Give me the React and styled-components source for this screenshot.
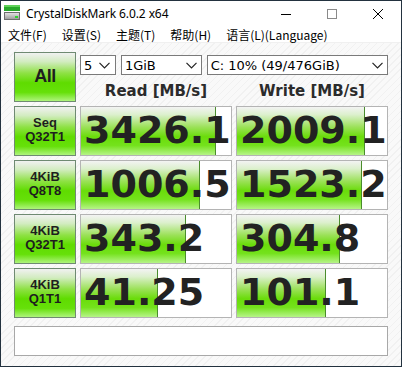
import React from "react";
import styled, { createGlobalStyle } from "styled-components";

// ================= GLOBAL =================

const GlobalStyle = createGlobalStyle`
  html, body {
    margin: 0;
    padding: 0;
    background: #ffffff;
  }

  #root {
    width: 402px;
    height: 367px;
  }
`;

// ================= WINDOW CHROME =================

const Window = styled.div`
  width: 402px;
  height: 367px;
  box-sizing: border-box;
  border: 1px solid #23323f;
  display: flex;
  flex-direction: column;
  background: #ffffff;
  overflow: hidden;
`;

const TitleBar = styled.div`
  height: 29px;
  display: flex;
  align-items: flex-start;
  background: #ffffff;
`;

const AppIcon = styled.div`
  width: 16px;
  height: 16px;
  margin: 3px 6px 0 3px;
  display: flex;
`;

const TitleText = styled.div`
  margin-top: 4px;
  font-family: "Noto Sans", "Open Sans", sans-serif;
  font-size: 12px;
  line-height: 17px;
  color: #000000;
  flex: 1;
  letter-spacing: -0.1px;
`;

const CtrlButton = styled.div`
  width: 46px;
  height: 29px;
  display: flex;
  align-items: center;
  justify-content: center;
  margin-top: -2px;
`;

const MenuBar = styled.div`
  height: 14px;
  display: flex;
  align-items: center;
  gap: 15px;
  padding-left: 7px;
  border-bottom: 1px solid #f0f0f0;
  font-family: "Noto Sans CJK SC", "Noto Sans", sans-serif;
  font-size: 12px;
  color: #000000;
`;

const MenuItem = styled.span`
  line-height: 14px;
  white-space: nowrap;
`;

// ================= CLIENT =================

const Client = styled.div`
  flex: 1;
  padding: 9px 13px 0 13px;
  background-color: #f8f8f8;
  background-image: repeating-linear-gradient(
    -45deg,
    #f9f9f9 0px,
    #f9f9f9 4px,
    #f1f1f1 4px,
    #f1f1f1 5px
  );
`;

const Board = styled.div`
  display: grid;
  grid-template-columns: 62px 152px 152px;
  grid-auto-rows: 50px;
  column-gap: 4px;
  row-gap: 4px;
`;

const greenButton = `
  background: linear-gradient(
    180deg,
    #f1f1f1 0%,
    #d2ecc0 18%,
    #8ee144 42%,
    #5fdc00 62%,
    #66e00a 82%,
    #aef47c 100%
  );
`;

const RunButton = styled.div`
  box-sizing: border-box;
  border: 1px solid #6f8a72;
  ${greenButton}
  display: flex;
  flex-direction: column;
  align-items: center;
  justify-content: center;
  font-family: "Liberation Sans", Arial, sans-serif;
  font-weight: bold;
  color: #1e1e1e;
  font-size: ${(p) => (p.$big ? "18px" : "13px")};
  line-height: ${(p) => (p.$big ? "18px" : "14px")};
  padding-bottom: ${(p) => (p.$big ? "2px" : "3px")};
  letter-spacing: ${(p) => (p.$big ? "-0.5px" : "0")};
`;

const TopPanel = styled.div`
  grid-column: 2 / span 2;
  display: flex;
  flex-direction: column;
`;

const SelectRow = styled.div`
  margin-top: 3px;
  display: flex;
  gap: 5px;
  height: 20px;
`;

const Select = styled.div`
  box-sizing: border-box;
  width: ${(p) => p.$w}px;
  height: 20px;
  border: 1px solid #7a7a7a;
  background: #ffffff;
  display: flex;
  align-items: center;
  justify-content: space-between;
  padding: 0 ${(p) => p.$pr}px 0 3px;
  font-family: "DejaVu Sans", Verdana, sans-serif;
  font-size: 13px;
  color: #000000;
`;

const HeaderRow = styled.div`
  flex: 1;
  display: grid;
  grid-template-columns: 152px 152px;
  column-gap: 4px;
  align-items: center;
  padding-top: 4px;
`;

const Header = styled.div`
  text-align: center;
  font-family: "DejaVu Sans", Verdana, sans-serif;
  font-weight: bold;
  font-size: 15px;
  color: #2b2b2b;
`;

const Cell = styled.div`
  position: relative;
  box-sizing: border-box;
  border: 1px solid #b4b4b4;
  background: #ffffff;
  overflow: hidden;
  display: flex;
  align-items: center;
`;

const Fill = styled.div`
  position: absolute;
  left: 0;
  top: 0;
  bottom: 0;
  box-sizing: border-box;
  border-right: 1px solid #4a8c2c;
  background: linear-gradient(
    180deg,
    #f3f3f3 0%,
    #dcf0cd 16%,
    #9be158 42%,
    #6adc0a 62%,
    #74e21c 80%,
    #b6f488 100%
  );
`;

const Value = styled.span`
  position: relative;
  padding-left: 3px;
  margin-top: -2px;
  font-family: "DejaVu Sans", Verdana, sans-serif;
  font-weight: bold;
  font-size: 38px;
  line-height: 1;
  color: #222222;
  white-space: nowrap;
`;

const Comment = styled.div`
  grid-column: 1 / span 3;
  margin-top: 4px;
  height: 30px;
  box-sizing: border-box;
  border: 1px solid #a8a8a8;
  background: #ffffff;
`;

// ================= ICONS =================

const Chevron = () => (
  <svg width="11" height="7" viewBox="0 0 11 7">
    <polyline points="0.5,0.8 5.5,5.8 10.5,0.8" fill="none" stroke="#222" strokeWidth="1.2" />
  </svg>
);

const DiskIcon = () => (
  <svg width="16" height="16" viewBox="0 0 16 16">
    <defs>
      <linearGradient id="dg" x1="0" y1="0" x2="0" y2="1">
        <stop offset="0" stopColor="#e6e6e6" />
        <stop offset="1" stopColor="#9a9a9a" />
      </linearGradient>
    </defs>
    <rect x="0" y="1" width="16" height="6" fill="#27a82a" />
    <rect x="0" y="1" width="16" height="2" fill="#5fd25a" />
    <rect x="0.5" y="8.5" width="15" height="7" fill="url(#dg)" stroke="#6e6e6e" />
    <rect x="11" y="12" width="3" height="2" fill="#2fd030" />
  </svg>
);

const MinIcon = () => (
  <svg width="10" height="10" viewBox="0 0 10 10">
    <line x1="0" y1="5.5" x2="10" y2="5.5" stroke="#000" strokeWidth="1" />
  </svg>
);

const MaxIcon = () => (
  <svg width="10" height="10" viewBox="0 0 10 10">
    <rect x="0.5" y="0.5" width="9" height="9" fill="none" stroke="#8a8a8a" strokeWidth="1" />
  </svg>
);

const CloseIcon = () => (
  <svg width="10" height="10" viewBox="0 0 10 10">
    <path d="M0 0 L10 10 M10 0 L0 10" stroke="#000" strokeWidth="1" />
  </svg>
);

// ================= DATA =================

const rows = [
  { l1: "Seq", l2: "Q32T1", read: "3426.1", rw: 135, write: "2009.1", ww: 128 },
  { l1: "4KiB", l2: "Q8T8", read: "1006.5", rw: 119, write: "1523.2", ww: 125 },
  { l1: "4KiB", l2: "Q32T1", read: "343.2", rw: 105, write: "304.8", ww: 103 },
  { l1: "4KiB", l2: "Q1T1", read: "41.25", rw: 77, write: "101.1", ww: 89 },
];

const menus = ["文件(F)", "设置(S)", "主题(T)", "帮助(H)", "语言(L)(Language)"];

// ================= COMPONENT =================

export default function App() {
  return (
    <>
      <GlobalStyle />
      <Window>
        <TitleBar>
          <AppIcon>
            <DiskIcon />
          </AppIcon>
          <TitleText>CrystalDiskMark 6.0.2 x64</TitleText>
          <CtrlButton>
            <MinIcon />
          </CtrlButton>
          <CtrlButton>
            <MaxIcon />
          </CtrlButton>
          <CtrlButton>
            <CloseIcon />
          </CtrlButton>
        </TitleBar>

        <MenuBar>
          {menus.map((m) => (
            <MenuItem key={m}>{m}</MenuItem>
          ))}
        </MenuBar>

        <Client>
          <Board>
            <RunButton $big>All</RunButton>
            <TopPanel>
              <SelectRow>
                <Select $w={36} $pr={5}>
                  <span>5</span>
                  <Chevron />
                </Select>
                <Select $w={81} $pr={4}>
                  <span>1GiB</span>
                  <Chevron />
                </Select>
                <Select $w={182} $pr={4}>
                  <span>C: 10% (49/476GiB)</span>
                  <Chevron />
                </Select>
              </SelectRow>
              <HeaderRow>
                <Header>Read [MB/s]</Header>
                <Header>Write [MB/s]</Header>
              </HeaderRow>
            </TopPanel>

            {rows.map((r, i) => (
              <React.Fragment key={i}>
                <RunButton>
                  <span>{r.l1}</span>
                  <span>{r.l2}</span>
                </RunButton>
                <Cell>
                  <Fill style={{ width: r.rw }} />
                  <Value>{r.read}</Value>
                </Cell>
                <Cell>
                  <Fill style={{ width: r.ww }} />
                  <Value>{r.write}</Value>
                </Cell>
              </React.Fragment>
            ))}

            <Comment />
          </Board>
        </Client>
      </Window>
    </>
  );
}
